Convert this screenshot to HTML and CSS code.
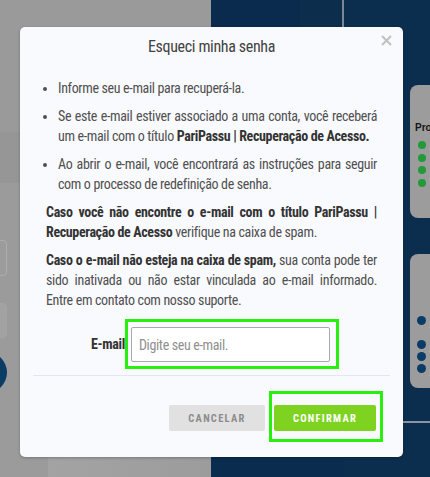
FILE: index.html
```html
<!DOCTYPE html>
<html lang="pt-BR">
<head>
<meta charset="utf-8">
<title>Esqueci minha senha</title>
<link rel="stylesheet" href="styles.css">
</head>
<body>
<div class="page">
  <div class="left">
    <div class="l-top"></div>
    <div class="l-band"></div>
    <div class="l-field"></div>
    <div class="l-field l-field-filled"></div>
    <div class="l-circle"></div>
    <div class="l-spacer"></div>
    <div class="l-bottom"><div class="l-bottom-inner"></div></div>
  </div>
  <div class="right">
    <div class="r-panel-a">
      <div class="r-head"><div class="r-seg1"></div><div class="r-seg2"></div></div>
    </div>
    <div class="r-divider"></div>
    <div class="r-panel-b">
      <div class="card">
        <div class="card-title">Pro</div>
        <div class="dots green">
          <span></span><span></span><span></span><span></span>
        </div>
      </div>
      <div class="card card-2">
        <div class="dots blue first"><span></span></div>
        <div class="dots blue">
          <span></span><span></span><span></span>
        </div>
      </div>
      <div class="r-hline"></div>
    </div>
  </div>
</div>

<div class="overlay">
  <div class="modal">
    <div class="modal-header">
      <h4 class="modal-title">Esqueci minha senha</h4>
      <span class="close" aria-label="Fechar">
        <svg width="11" height="11" viewBox="0 0 11 11"><path d="M1 1 L10 10 M10 1 L1 10" stroke="#c2c2c2" stroke-width="2.2" fill="none"/></svg>
      </span>
    </div>
    <div class="modal-body">
      <ul class="steps">
        <li>Informe seu e-mail para recuperá-la.</li>
        <li>Se este e-mail estiver associado a uma conta, você receberá um e-mail com o título <b>PariPassu | Recuperação de Acesso.</b></li>
        <li>Ao abrir o e-mail, você encontrará as instruções para seguir com o processo de redefinição de senha.</li>
      </ul>
      <p class="note"><b>Caso você não encontre o e-mail com o título PariPassu | Recuperação de Acesso</b> verifique na caixa de spam.</p>
      <p class="note"><b>Caso o e-mail não esteja na caixa de spam,</b> sua conta pode ter sido inativada ou não estar vinculada ao e-mail informado. Entre em contato com nosso suporte.</p>
      <div class="email-row">
        <label class="email-label" for="email">E-mail</label>
        <div class="highlight hl-input">
          <input id="email" class="email-input" type="text" placeholder="Digite seu e-mail.">
        </div>
      </div>
    </div>
    <div class="modal-footer">
      <button class="btn btn-cancel">CANCELAR</button>
      <div class="highlight hl-btn">
        <button class="btn btn-confirm">CONFIRMAR</button>
      </div>
    </div>
  </div>
</div>
</body>
</html>
```

FILE: styles.css
```css
* { box-sizing: border-box; }

html, body {
  margin: 0;
  width: 430px;
  height: 477px;
  overflow: hidden;
}

body {
  position: relative;
  font-family: "Roboto Condensed", Roboto, "Liberation Sans", sans-serif;
  font-stretch: condensed;
  letter-spacing: -0.35px;
}

/* ---------- background page (dimmed) ---------- */
.page {
  display: grid;
  grid-template-columns: 211px 219px;
  height: 477px;
}

.left {
  background: #9b9b9b;
  display: flex;
  flex-direction: column;
  overflow: hidden;
}

.l-top { height: 132px; background: #9a9a9a; }
.l-band { height: 51px; background: #969696; }

.l-field {
  margin-top: 57px;
  margin-left: -24px;
  width: 31px;
  height: 36px;
  border: 1px solid #adadad;
  border-radius: 4px;
  background: #9c9c9c;
}

.l-field-filled {
  margin-top: 27px;
  height: 35px;
  background: #a2a2a2;
  border-color: #a4a4a4;
}

.l-circle {
  margin-top: 14px;
  margin-left: -34px;
  width: 41px;
  height: 41px;
  border-radius: 50%;
  background: #0b3c64;
}

.l-spacer { flex: 1; }

.l-bottom {
  height: 21px;
  padding-left: 48px;
}

.l-bottom-inner {
  height: 100%;
  background: linear-gradient(90deg, #a3a3a3, #9c9c9c);
}

.right {
  display: flex;
  background: #0a2c4e;
  overflow: hidden;
}

.r-panel-a {
  width: 131px;
  flex-shrink: 0;
}

.r-head {
  display: flex;
  height: 40px;
}

.r-seg1 { width: 89px; background: #0a2b4e; }
.r-seg2 { flex: 1; background: #0c2e4c; }

.r-divider {
  width: 2px;
  height: 40px;
  flex-shrink: 0;
  background: #7b8794;
}

.r-panel-b {
  flex: 1;
  min-width: 0;
  display: flex;
  flex-direction: column;
  padding-top: 85px;
  background: #0b2e4e;
}

.card {
  margin-left: 66px;
  width: 40px;
  flex-shrink: 0;
  height: 133px;
  background: #9c9c9c;
  border-radius: 8px 0 0 8px;
  padding: 36px 0 0 5px;
}

.card-2 {
  margin-top: 36px;
  height: 134px;
  padding-top: 62px;
}

.card-title {
  font-family: "Liberation Sans", Arial, sans-serif;
  letter-spacing: 0;
  font-weight: 700;
  font-size: 10px;
  line-height: 14px;
  color: #151515;
  white-space: nowrap;
}

.dots {
  display: flex;
  flex-direction: column;
  gap: 4.5px;
  margin-top: 6px;
  padding-left: 3px;
}

.dots span {
  display: block;
  width: 8px;
  height: 8px;
  border-radius: 50%;
}

.green span { background: #229a3a; }

.blue { gap: 3px; padding-left: 2px; }
.blue span { width: 9px; height: 9px; background: #0b3b66; }
.dots.first { margin-top: 0; margin-bottom: 14.5px; }

.r-hline {
  margin-top: 33px;
  height: 2px;
  flex-shrink: 0;
  background: #8a95a1;
}

/* ---------- modal ---------- */
.overlay {
  position: absolute;
  inset: 0;
  padding: 27px 0 0 20px;
}

.modal {
  width: 383px;
  background: #f9fafd;
  border-radius: 5px;
  box-shadow: 0 1px 3px rgba(0, 0, 0, 0.25);
}

.modal-header {
  position: relative;
  padding: 10px 26px;
  text-align: center;
}

.modal-title {
  margin: 0;
  font-size: 16px;
  line-height: 20px;
  font-weight: 400;
  color: #424242;
}

.close {
  position: absolute;
  right: 11px;
  top: 8px;
  display: block;
  width: 11px;
  height: 11px;
}

.close svg { display: block; }

.modal-body {
  padding: 11px 26px 0;
  font-size: 14px;
  line-height: 20px;
  color: #505050;
  text-align: justify;
}

.modal-body b { color: #333; font-weight: 700; }

.steps {
  margin: 0;
  padding-left: 12px;
}

.steps li { margin-bottom: 8px; }

.note { margin: 0 0 8px; }

.email-row {
  display: flex;
  align-items: center;
  justify-content: center;
  margin: 9px 0 0 7px;
}

.email-label {
  font-weight: 700;
  color: #333;
  font-size: 14px;
}

.highlight {
  border: 3px solid #27f00c;
}

.hl-input { padding: 5px 6px 4px 3px; }

.email-input {
  display: block;
  width: 199px;
  height: 35px;
  border: 1px solid #a9a9a9;
  border-radius: 2px;
  background: #fff;
  padding: 0 7px;
  font-family: inherit;
  font-stretch: condensed;
  letter-spacing: -0.35px;
  font-size: 14px;
  color: #555;
}

.email-input::placeholder { color: #8f8f8f; }

.modal-footer {
  display: flex;
  justify-content: flex-end;
  align-items: flex-start;
  gap: 4px;
  margin: 6px 13px 0;
  padding: 15px 7px 15px 0;
  border-top: 1px solid #e3e6ec;
}

.hl-btn { padding: 11px 4px 8px 2px; }

.btn {
  display: block;
  height: 26px;
  border: 0;
  border-radius: 2px;
  font-family: inherit;
  font-stretch: condensed;
  font-size: 10.5px;
  font-weight: 700;
  letter-spacing: 1.3px;
  padding: 0;
}

.btn-cancel {
  margin-top: 14px;
  width: 96px;
  background: #e1e1e1;
  color: #8c8c8c;
}

.btn-confirm {
  width: 102px;
  background: #7ed321;
  color: #fff;
}
```
